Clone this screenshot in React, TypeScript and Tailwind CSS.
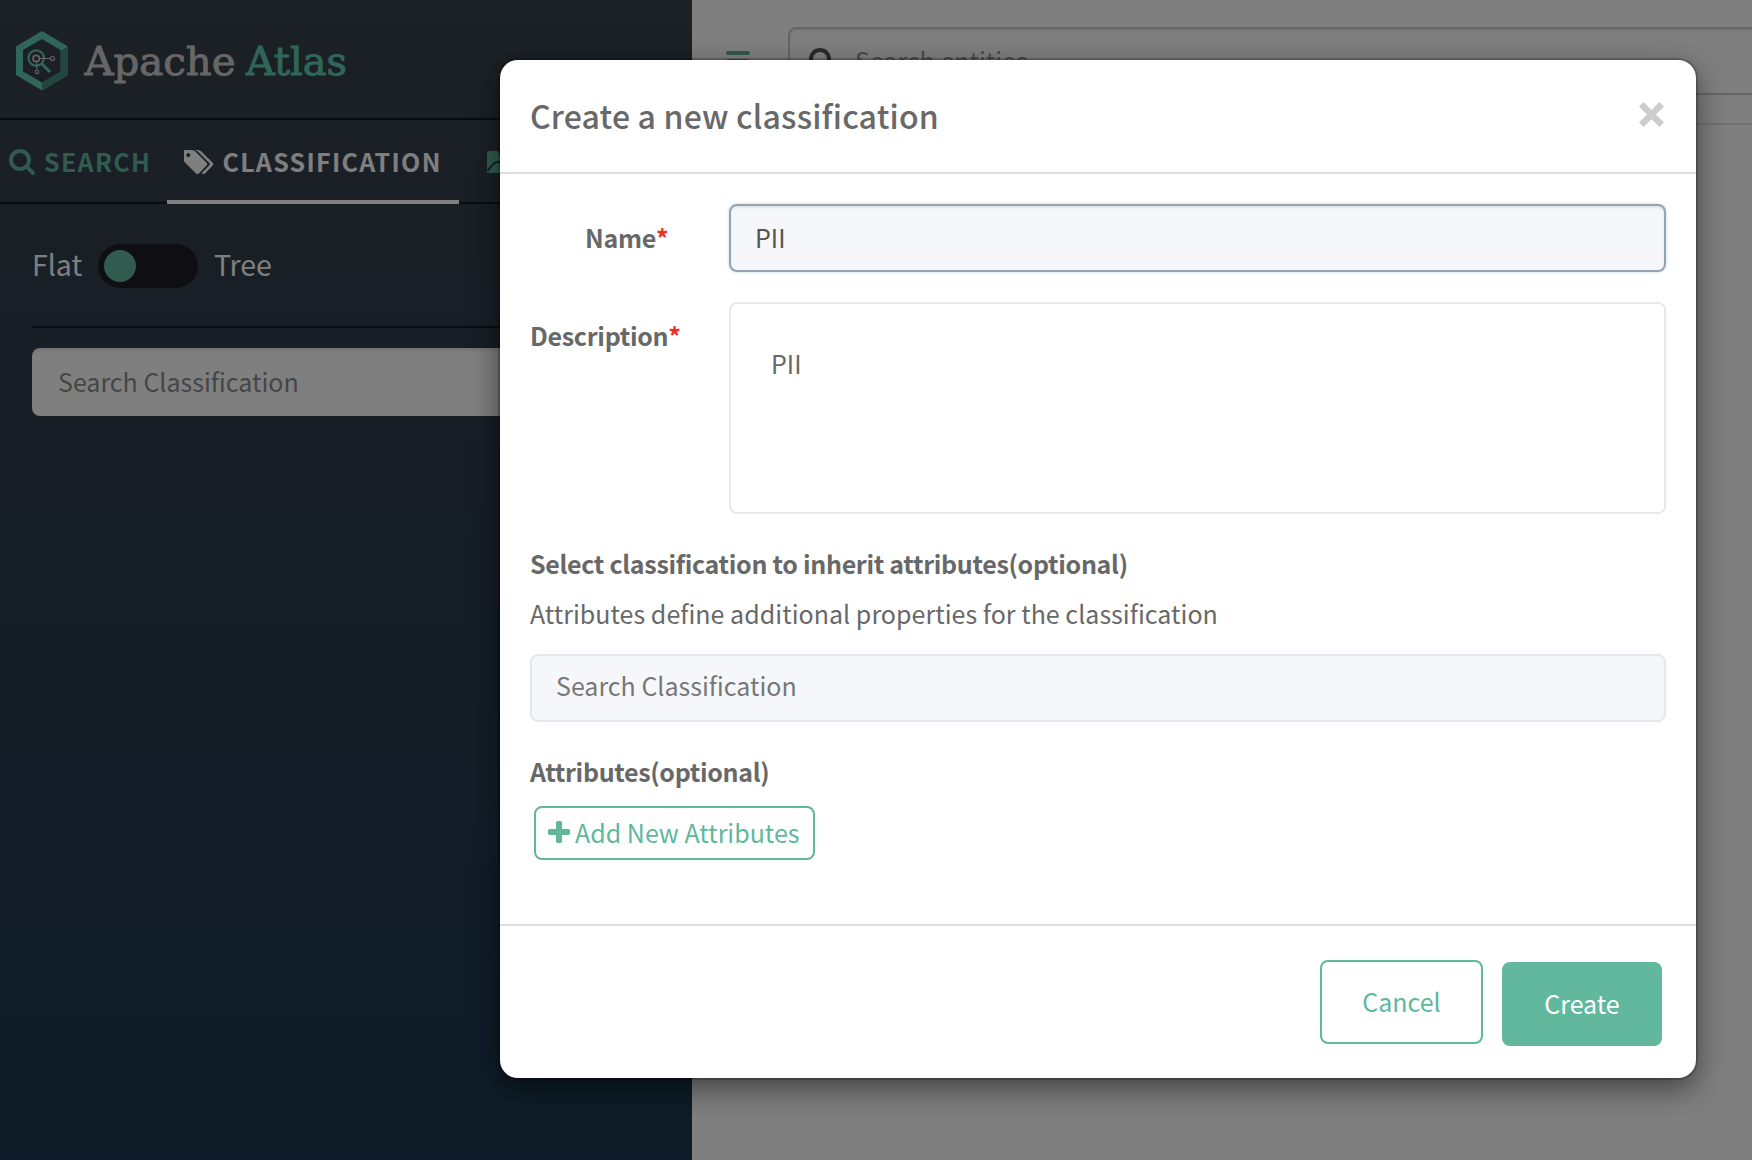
import type { ReactNode } from "react";

const SEARCH_PATH =
  "M1216 832q0-185-131.5-316.5t-316.5-131.5-316.5 131.5-131.5 316.5 131.5 316.5 316.5 131.5 316.5-131.5 131.5-316.5zm512 832q0 52-38 90t-90 38q-54 0-90-38l-343-342q-179 124-399 124-143 0-273.5-55.5t-225-150-150-225-55.5-273.5 55.5-273.5 150-225 225-150 273.5-55.5 273.5 55.5 225 150 150 225 55.5 273.5q0 220-124 399l343 343q37 37 37 90z";

function SearchIcon({ className }: { className: string }) {
  return (
    <svg viewBox="64 128 1664 1664" className={className} fill="currentColor">
      <path d={SEARCH_PATH} />
    </svg>
  );
}

function TagsIcon({ className }: { className: string }) {
  return (
    <svg viewBox="0 128 1835 1515" className={className} fill="currentColor">
      <path d="M384 448q0-53-37.5-90.5t-90.5-37.5-90.5 37.5-37.5 90.5 37.5 90.5 90.5 37.5 90.5-37.5 37.5-90.5zm1067 576q0 53-37 90l-491 492q-39 37-91 37-53 0-90-37l-715-716q-38-37-64.5-101t-26.5-117v-416q0-52 38-90t90-38h416q53 0 117 26.5t102 64.5l715 714q37 39 37 91zm384 0q0 53-37 90l-491 492q-39 37-91 37-36 0-59-14t-53-45l470-470q37-37 37-90 0-52-37-91l-715-714q-38-38-102-64.5t-117-26.5h224q53 0 117 26.5t102 64.5l715 714q37 39 37 91z" />
    </svg>
  );
}

function GlossaryIcon({ className }: { className: string }) {
  return (
    <svg viewBox="0 0 26 22" className={className}>
      <path d="M0 3a3 3 0 0 1 3-3h6a3 3 0 0 1 3 3v1h11a3 3 0 0 1 3 3v15H0z" fill="currentColor" />
      <path d="M0.500 20C5 15 6 11 12 11h14" fill="none" stroke="#303a46" strokeWidth="2" />
    </svg>
  );
}

function PlusIcon({ className }: { className: string }) {
  return (
    <svg viewBox="192 128 1408 1408" className={className} fill="currentColor">
      <path d="M1600 736v192q0 40-28 68t-68 28h-416v416q0 40-28 68t-68 28h-192q-40 0-68-28t-28-68v-416h-416q-40 0-68-28t-28-68v-192q0-40 28-68t68-28h416v-416q0-40 28-68t68-28h192q40 0 68 28t28 68v416h416q40 0 68 28t28 68z" />
    </svg>
  );
}

function Logo() {
  return (
    <svg width="352" height="64" viewBox="0 0 352 64" className="mt-[29px]">
      {/* hexagon, drawn from the outer edge inwards */}
      <path d="M42 2L68 17.500V46L42 61.500L16 46V17.500z" fill="#60cdb4" />
      <path d="M68 17.500V46L42 61.500V53.500L60.500 42.500V22z" fill="#458d7d" />
      <path d="M42 10L60.500 21V42.500L42 53.500L23 42.500V21z" fill="#38414a" />
      <circle cx="36.200" cy="29" r="7.700" fill="none" stroke="#60cdb4" strokeWidth="2.200" />
      <path d="M41.500 34.500L50 43" stroke="#60cdb4" strokeWidth="3" />
      <g fill="none" stroke="#c9c9c9">
        <circle cx="36.200" cy="29.500" r="3.200" strokeWidth="1.700" />
        <path d="M39.500 29.500H50.500M36.800 33V41" strokeWidth="1" />
        <circle cx="52.500" cy="29.500" r="2" strokeWidth="1.100" />
        <circle cx="37" cy="43" r="1.700" strokeWidth="1.100" />
      </g>
      <g fontFamily="'DejaVu Serif', serif" fontSize="39.500" strokeWidth="0.900">
        <text x="84.500" y="46" textLength="151" lengthAdjust="spacingAndGlyphs" fill="#cfcdcd" stroke="#cfcdcd">
          Apache
        </text>
        <text x="246" y="46" textLength="101" lengthAdjust="spacingAndGlyphs" fill="#60cdb4" stroke="#60cdb4">
          Atlas
        </text>
      </g>
    </svg>
  );
}

function Sidebar() {
  return (
    <aside className="flex w-[692px] shrink-0 flex-col bg-linear-to-b from-[#38424a] via-[#2e3c4a] via-35% to-[#1c3852] text-white">
      <div className="h-[120px] border-b-2 border-[#16191f]">
        <Logo />
      </div>
      <nav className="flex h-[84px] border-b-2 border-[#16191f] text-[25px] font-bold tracking-[1.3px] text-[#60b79c]">
        <div className="flex h-[84px] w-[167px] items-center gap-[9px] pl-[9px]">
          <SearchIcon className="size-[26px]" />
          <span>SEARCH</span>
        </div>
        <div className="flex h-[84px] w-[292px] items-center gap-[9px] border-b-4 border-white pl-[17px] text-white">
          <TagsIcon className="mt-1 h-6 w-[29.500px]" />
          <span className="mt-1">CLASSIFICATION</span>
        </div>
        <div className="flex h-[84px] items-center gap-[9px] pb-1 pl-7">
          <GlossaryIcon className="mt-1 h-[22px] w-[26px]" />
          <span>GLOSSARY</span>
        </div>
      </nav>
      <div className="mx-8 flex h-[124px] items-center border-b-2 border-[#16191f] pb-1.5 text-[28.500px] leading-none">
        <span className="mt-[5px] w-[66px]">Flat</span>
        <span className="mt-2 flex h-11 w-[100px] items-center rounded-full bg-[#1e1f26] p-1.5">
          <span className="size-8 rounded-full bg-[#60b79c]" />
        </span>
        <span className="ml-4 mt-[5px]">Tree</span>
      </div>
      <div className="mx-8 mt-5 flex h-[68px] items-center rounded-lg bg-white px-[26px] text-[25px] text-[#8c8c8c] shadow-[inset_0_3px_2px_rgba(0,0,0,0.08)]">
        Search Classification
      </div>
    </aside>
  );
}

function MainArea() {
  return (
    <main className="flex min-w-0 flex-1 flex-col bg-white">
      <div className="flex h-[125px] border-b-2 border-[#e4e4e4] pl-[34px] pt-[27px]">
        <div className="mt-6 flex w-6 flex-col gap-1 text-[#60b79c]">
          <span className="h-1 rounded-xs bg-current" />
          <span className="h-1 rounded-xs bg-current" />
          <span className="h-1 rounded-xs bg-current" />
        </div>
        <div className="ml-[38px] flex h-[68px] flex-1 items-center rounded-l-lg border-2 border-r-0 border-[#cccccc] pl-[19px] text-[25px] text-[#999999] shadow-[inset_0_2px_2px_rgba(0,0,0,0.075)]">
          <SearchIcon className="size-[26px] text-[#555555]" />
          <span className="ml-5">Search entities</span>
        </div>
      </div>
    </main>
  );
}

function FieldLabel({ children, className }: { children: ReactNode; className: string }) {
  return (
    <label className={`flex text-[25px] leading-[36px] font-bold tracking-[-0.3px] ${className}`}>
      {children}
      <span className="text-[#ee3124]">*</span>
    </label>
  );
}

function Modal() {
  return (
    <section className="ml-[500px] mt-[60px] flex h-[1018px] w-[1196px] flex-col rounded-[18px] bg-white text-[25px] text-[#686868] shadow-[0_0_0_2px_rgba(0,0,0,0.2),0_10px_30px_rgba(0,0,0,0.5)]">
      <header className="flex h-[114px] shrink-0 items-center justify-between border-b-2 border-[#dddddd] pb-[3px] pl-[30px] pr-8">
        <h1 className="text-[32px] leading-[48px] font-medium tracking-[0.18px]">Create a new classification</h1>
        <svg viewBox="0 0 25 25" className="size-[25px]" fill="none" stroke="#cccccc" strokeWidth="6.500">
          <path d="M2.300 2.300L22.700 22.700M22.700 2.300L2.300 22.700" />
        </svg>
      </header>

      <div className="flex h-[750px] flex-col px-[30px] pt-[30px]">
        <div className="flex">
          <FieldLabel className="w-[199px] pl-[55px] pt-[15px]">Name</FieldLabel>
          <div className="flex h-[68px] flex-1 items-center rounded-lg border-2 border-[#92a5b3] bg-[#f6f7fb] pl-6 text-[#555555] shadow-[inset_0_2px_2px_rgba(0,0,0,0.075),0_0_3px_rgba(104,145,162,0.4)]">
            PII
          </div>
        </div>
        <div className="mt-[30px] flex">
          <FieldLabel className="w-[199px] pt-[15px]">Description</FieldLabel>
          <div className="h-[212px] flex-1 rounded-lg border-2 border-[#e8e9ee] pl-10 pt-[41px] leading-[36px]">PII</div>
        </div>
        <h2 className="mt-[31px] leading-[36px] font-bold tracking-[-0.31px]">
          Select classification to inherit attributes(optional)
        </h2>
        <p className="mt-3.5 leading-[36px] tracking-[0.03px]">
          Attributes define additional properties for the classification
        </p>
        <div className="mt-[23px] flex h-[68px] items-center rounded-lg border-2 border-[#e6e8ef] bg-[#f6f7fb] pb-1 pl-6 text-[#777777]">
          Search Classification
        </div>
        <h2 className="mt-[31px] leading-[36px] font-bold tracking-[-0.33px]">Attributes(optional)</h2>
        <button className="ml-1 mt-[17px] flex h-[54px] w-[281px] items-center rounded-lg border-2 border-[#60b79c] pl-3 text-[#60b79c]">
          <PlusIcon className="mb-0.5 size-[22px]" />
          <span className="ml-[5px] whitespace-nowrap">Add New Attributes</span>
        </button>
      </div>

      <footer className="flex flex-1 justify-end gap-[19px] border-t-2 border-[#dddddd] pr-[34px] pt-[34px]">
        <button className="h-[84px] w-[163px] rounded-lg border-2 border-[#60b79c] text-[#60b79c]">Cancel</button>
        <button className="mt-0.5 h-[84px] w-40 rounded-lg bg-[#62b89d] text-white">Create</button>
      </footer>
    </section>
  );
}

export default function App() {
  return (
    <div className="relative flex h-[1160px] w-full overflow-hidden font-['Noto_Sans_CJK_SC',sans-serif]">
      <Sidebar />
      <MainArea />
      <div className="absolute inset-0 bg-black/50">
        <div className="flex">
          <Modal />
        </div>
      </div>
    </div>
  );
}
